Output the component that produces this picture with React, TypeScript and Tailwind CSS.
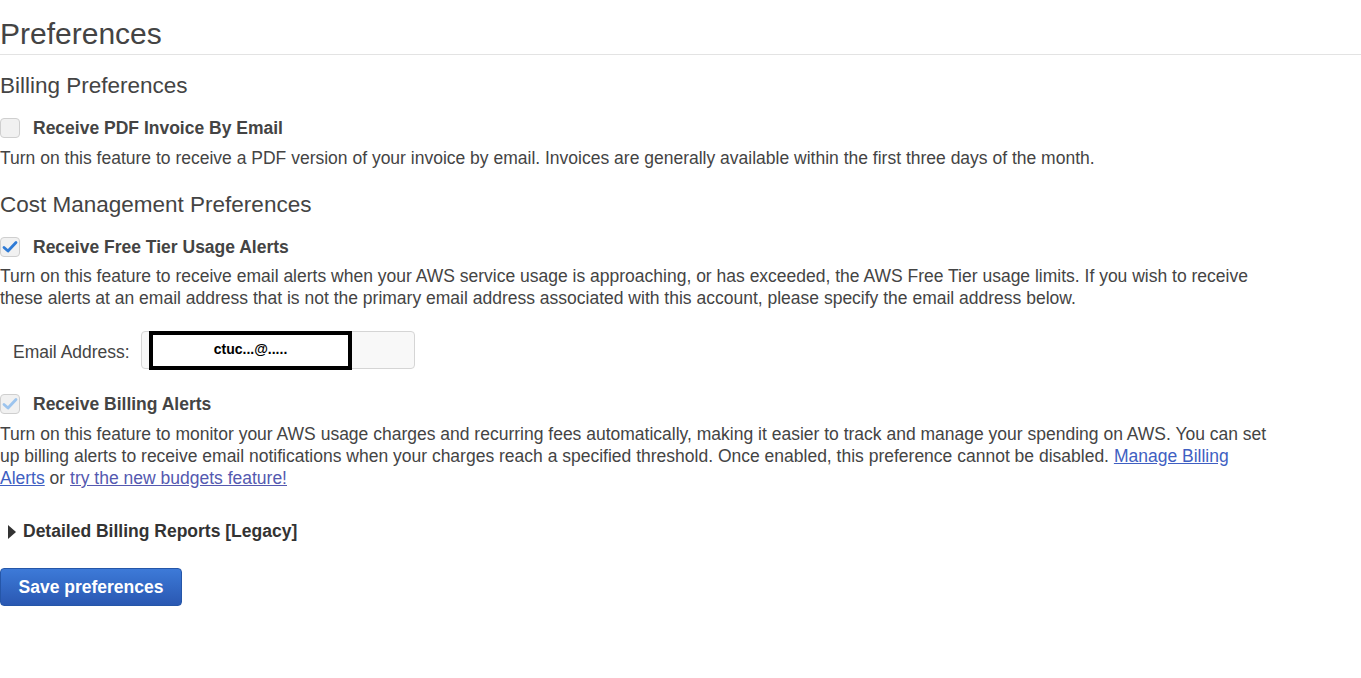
import React from "react";

function Check({ checked, disabled }: { checked?: boolean; disabled?: boolean }) {
  return (
    <span className="flex h-[20px] w-[20px] shrink-0 items-center justify-center rounded-[4px] border border-[#cfcfcf] bg-[#f1f1f1]">
      {checked && (
        <svg width="16" height="14" viewBox="0 0 16 14">
          <path
            d="M2 7.5 L6 11 L14 2.5"
            fill="none"
            stroke={disabled ? "#9cc4ee" : "#2f7bd6"}
            strokeWidth="2.8"
            strokeLinecap="round"
            strokeLinejoin="round"
          />
        </svg>
      )}
    </span>
  );
}

function CheckRow({ label, checked, disabled }: { label: string; checked?: boolean; disabled?: boolean }) {
  return (
    <label className="flex h-[22px] items-center gap-[13px]">
      <Check checked={checked} disabled={disabled} />
      <span className="font-bold text-[17.5px] text-[#444]">{label}</span>
    </label>
  );
}

export default function App() {
  return (
    <div
      className="min-h-screen bg-white text-[#444] text-[17.5px] leading-[22px]"
      style={{ fontFamily: '"Liberation Sans", Arial, sans-serif' }}
    >
      <h1 className="pt-[16px] pb-[2px] text-[30px] leading-[36px] text-[#444] border-b border-[#e3e3e3]">Preferences</h1>

      <div className="w-[1270px]">
        <h3 className="mt-[18px] text-[22.5px] leading-[26px]">Billing Preferences</h3>
        <div className="mt-[18px]">
          <CheckRow label="Receive PDF Invoice By Email" />
        </div>
        <p className="mt-[8px]">
          Turn on this feature to receive a PDF version of your invoice by email. Invoices are generally available within the first three days of the month.
        </p>

        <h3 className="mt-[23px] text-[22.5px] leading-[26px]">Cost Management Preferences</h3>
        <div className="mt-[18px]">
          <CheckRow label="Receive Free Tier Usage Alerts" checked />
        </div>
        <p className="mt-[7px]">
          Turn on this feature to receive email alerts when your AWS service usage is approaching, or has exceeded, the AWS Free Tier usage limits. If you wish to receive these alerts at an email address that is not the primary email address associated with this account, please specify the email address below.
        </p>

        <div className="mt-[22px] flex items-center pl-[13px]">
          <span className="w-[128px] pt-[4px]">Email Address:</span>
          <div className="relative h-[38px] w-[274px] rounded-[4px] border border-[#d5d5d5] bg-[#f8f8f8]">
            <div className="absolute left-[7px] top-[-1px] flex h-[39px] w-[203px] items-start justify-center border-[4px] border-black bg-white pt-[6px]">
              <span className="font-bold text-[14px] leading-[16px] text-black">ctuc...@.....</span>
            </div>
          </div>
        </div>

        <div className="mt-[24px]">
          <CheckRow label="Receive Billing Alerts" checked disabled />
        </div>
        <p className="mt-[8px]">
          Turn on this feature to monitor your AWS usage charges and recurring fees automatically, making it easier to track and manage your spending on AWS. You can set up billing alerts to receive email notifications when your charges reach a specified threshold. Once enabled, this preference cannot be disabled.{" "}
          <a href="#" className="text-[#3f5fc2] underline">Manage Billing Alerts</a> or{" "}
          <a href="#" className="text-[#5459b0] underline">try the new budgets feature!</a>
        </p>

        <div className="mt-[31px] flex items-center pl-[8px] h-[22px]">
          <svg width="8" height="14" viewBox="0 0 8 14" className="mr-[7px] mt-[2px]">
            <path d="M0 0 L8 7 L0 14 Z" fill="#333" />
          </svg>
          <span className="font-bold text-[#333]">Detailed Billing Reports [Legacy]</span>
        </div>

        <button className="mt-[26px] h-[38px] w-[182px] rounded-[4px] border border-[#2556a8] bg-gradient-to-b from-[#3d7ad8] to-[#2a58b2] font-bold text-[17.5px] text-white">
          Save preferences
        </button>
      </div>
    </div>
  );
}
